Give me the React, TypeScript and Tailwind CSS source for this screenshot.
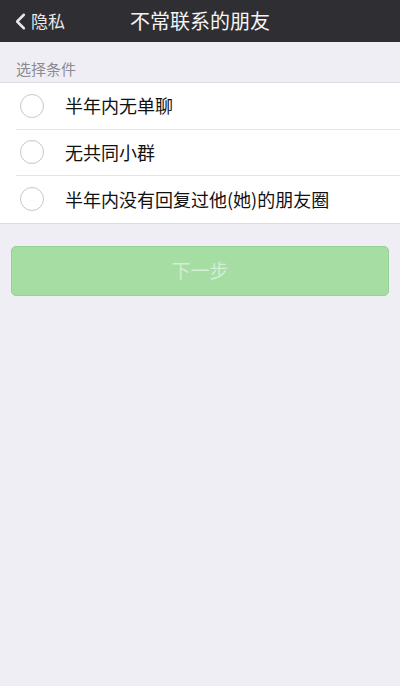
import { ChevronLeft } from "lucide-react";

const options = ["半年内无单聊", "无共同小群", "半年内没有回复过他(她)的朋友圈"];

export default function App() {
  return (
    <div
      className="flex min-h-[686px] w-[400px] flex-col bg-[#efeef5]"
      style={{ fontFamily: '"PingFang SC", "Noto Sans CJK SC", sans-serif' }}
    >
      <header className="relative flex h-[42px] items-center justify-center bg-[#2f2e33] text-[#f4f4f4]">
        <div className="absolute left-[7px] top-0 flex h-full items-center text-[17px] text-[#e8e8e8]">
          <ChevronLeft className="h-[27px] w-[27px] -mr-[3px]" strokeWidth={2.2} />
          <span>隐私</span>
        </div>
        <h1 className="text-[20px] font-normal">不常联系的朋友</h1>
      </header>

      <div className="px-[16px] pb-[4px] pt-[17px] text-[15px] leading-[19px] text-[#8a8a90]">选择条件</div>

      <ul className="border-y border-[#dcdce0] bg-white">
        {options.map((label, i) => (
          <li
            key={label}
            className={`ml-[16px] flex h-[46.5px] items-center pl-[4px] ${
              i < options.length - 1 ? "border-b border-[#e4e4e8]" : ""
            }`}
          >
            <span className="h-[24px] w-[24px] shrink-0 rounded-full border border-[#c8c8cc]" />
            <span className="ml-[21px] text-[18px] text-[#111]">{label}</span>
          </li>
        ))}
      </ul>

      <div className="px-[11px] pt-[22px]">
        <button className="flex h-[50px] w-full items-center justify-center rounded-[5px] border border-[#96d196] bg-[#a5dda3] text-[19px] text-[#d3eed2]">
          下一步
        </button>
      </div>
    </div>
  );
}
